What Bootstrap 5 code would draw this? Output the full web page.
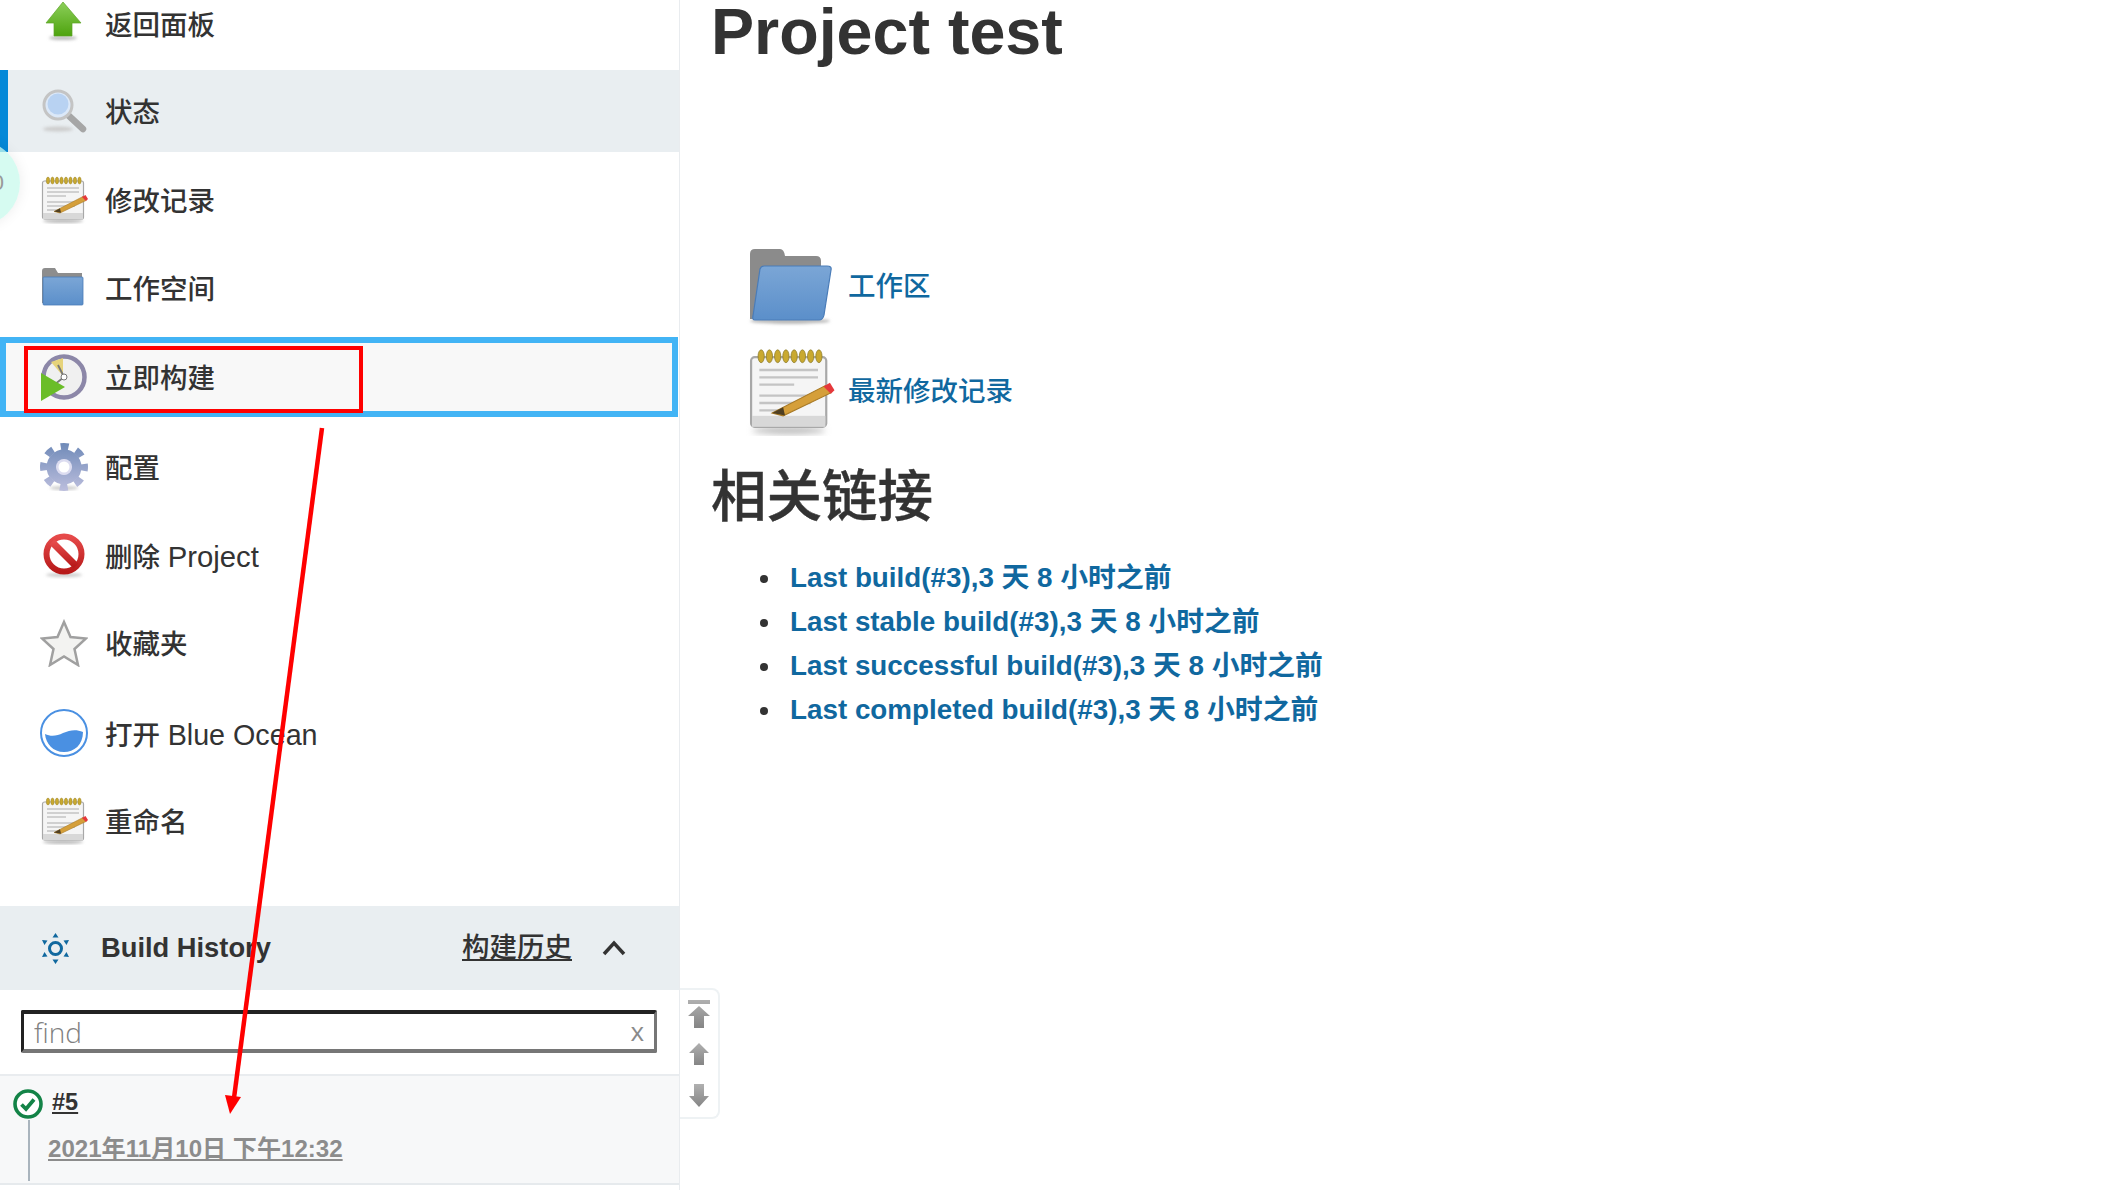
<!DOCTYPE html>
<html lang="zh"><head><meta charset="utf-8"><title>Project test</title>
<link href="https://cdn.jsdelivr.net/npm/bootstrap@5.3.0/dist/css/bootstrap.min.css" rel="stylesheet">
<style>
html,body{height:1190px;overflow:hidden;background:#fff}
body{font-family:"Liberation Sans","Noto Sans CJK SC",sans-serif;color:#333}
.pg{height:1190px;position:relative;overflow:hidden}
.side{width:680px;flex:none;border-right:1px solid #e9ecef;height:1190px}
.mrow{height:88px;padding-left:40px;gap:17px;font-size:27.5px;color:#333;text-decoration:none;line-height:1;font-weight:500}
.mrow span{margin-top:4px}
.mrow i{font-style:normal;font-size:29.3px}
.mrow i.oc{font-size:28.7px}
.mrow svg{width:48px;height:48px;flex:none;filter:blur(.4px)}
.mfirst{height:70px;padding-bottom:22px}
.mact{height:82px;background:#e9eef1;border-left:8px solid #0488d8;padding-left:32px;margin-bottom:4px}
.mfocus{height:80px;margin:5px 1px 6px 0;background:#f8f8f8;border:6px solid #42b4f5;padding-left:34px}
.mgap{margin-top:2px}
.redbox{position:absolute;left:24px;top:346px;width:339px;height:67px;border:4px solid #f00}
.blob{position:absolute;left:-66px;top:140px;width:86px;height:86px;border-radius:50%;background:rgba(200,250,236,.75);box-shadow:0 0 14px rgba(0,0,0,.08);color:#999;font-size:22px;line-height:86px;text-align:right;padding-right:16px}
.histhead{height:84px;margin-top:41px;background:#e9eef1;padding:0 53px 0 41px;font-size:27.3px}
.histhead b{margin-left:31px}
.histhead u{font-size:27.5px;font-weight:500}
.chev{width:24px;height:16px;margin-left:30px}
.findw{margin:20px 22px 21px 21px;height:43px;border:solid;border-width:4px 3px;border-color:#222 #767676 #767676 #222;padding:0 10px;border-radius:2px}
.findw input{border:0;outline:0;font-size:28px;flex:1;min-width:0;padding:0;color:#757575;font-weight:300;font-family:"Open Sans",sans-serif;background:transparent}
.findw input::placeholder{color:#808080}
.findw span{font-size:26px;color:#8a8a8a;font-family:"Open Sans",sans-serif}
.bitem{height:111px;background:#f7f8f9;border-top:2px solid #e9ecef;border-bottom:2px solid #e6eaed;position:relative}
.bnum{position:absolute;left:52px;top:9px;font-size:23.5px;font-weight:700;color:#333}
.bdate{position:absolute;left:48px;top:55px;font-size:24.1px;font-weight:700;color:#8c8c8c}
.bcheck{position:absolute;left:12px;top:13px;width:32px;height:32px}
.bline{position:absolute;left:28px;top:44px;width:2px;height:61px;background:#a9b4bd}
.fade{position:absolute;left:-40px;top:1184px;width:420px;height:12px;border-radius:50%;background:#e3e6e8;filter:blur(8px)}
.main{padding-left:31px;flex:1}
.ttl{font-size:64.6px;font-weight:700;line-height:1;margin:0;color:#333}
.lrow{padding-left:35px;gap:13px}
.lrow svg{filter:blur(.5px)}
.lrow a{font-size:27.5px;color:#10689f;text-decoration:none;font-weight:500}
.h2x{font-size:55.5px;font-weight:500;line-height:1;margin:34px 0 0;color:#333;-webkit-text-stroke:.4px #333}
.blist{margin:31px 0 0;padding-left:72px;font-size:27.8px;line-height:44px}
.blist li{color:#333;padding-left:7px}
.blist a{color:#10689f;text-decoration:none;font-weight:600}
.scrollbox{position:absolute;left:680px;top:988px;width:40px;height:131px;border:2px solid #eef2f4;border-left:0;border-radius:0 8px 8px 0;background:#fff;padding:10px 0 0;gap:15px}
.scrollbox svg{filter:blur(.4px)}
.overlay{position:absolute;left:0;top:0;width:2110px;height:1190px;pointer-events:none}
</style></head><body>
<svg width="0" height="0" class="position-absolute">
<defs>
<linearGradient id="gG" x1="0" y1="0" x2="0" y2="1"><stop offset="0" stop-color="#8ccf5a"/><stop offset="1" stop-color="#4ea30e"/></linearGradient>
<linearGradient id="gF" x1="0" y1="0" x2="0" y2="1"><stop offset="0" stop-color="#7ba6d6"/><stop offset="1" stop-color="#5b8fca"/></linearGradient>
<linearGradient id="gP" gradientUnits="userSpaceOnUse" x1="0" y1="0" x2="0" y2="48"><stop offset="0" stop-color="#6f8ab8"/><stop offset="1" stop-color="#bcbedd"/></linearGradient>
<linearGradient id="gS" x1="0" y1="0" x2="0" y2="1"><stop offset="0" stop-color="#e64a4a"/><stop offset="1" stop-color="#b81a1a"/></linearGradient>
<linearGradient id="gA" x1="0" y1="0" x2="0" y2="1"><stop offset="0" stop-color="#b0b0b0"/><stop offset="1" stop-color="#858585"/></linearGradient>
<filter id="bl" x="-30%" y="-200%" width="160%" height="500%"><feGaussianBlur stdDeviation="1.6"/></filter>
<symbol id="note" viewBox="0 0 48 48">
<ellipse cx="23" cy="45" rx="20" ry="2" fill="#bbb" filter="url(#bl)"/>
<rect x="2.500" y="5" width="41" height="38" rx="2" fill="#f5f5f5" stroke="#a8a8a8" stroke-width="1.200"/>
<rect x="3" y="37" width="40" height="6" fill="#d8d8d8"/>
<g fill="#c9a92f" stroke="#8b7a2a" stroke-width=".4"><ellipse cx="8" cy="4.500" rx="1.700" ry="3.500"/><ellipse cx="12.500" cy="4.500" rx="1.700" ry="3.500"/><ellipse cx="17" cy="4.500" rx="1.700" ry="3.500"/><ellipse cx="21.500" cy="4.500" rx="1.700" ry="3.500"/><ellipse cx="26" cy="4.500" rx="1.700" ry="3.500"/><ellipse cx="30.500" cy="4.500" rx="1.700" ry="3.500"/><ellipse cx="35" cy="4.500" rx="1.700" ry="3.500"/><ellipse cx="39.500" cy="4.500" rx="1.700" ry="3.500"/></g>
<path d="M7 12h32M7 16h32M7 20h19M7 26h32M7 30h28M7 34h12" stroke="#c4c4c4" stroke-width="1.300"/>
<path d="M14 35.500 L43 20.500 L46 24.500 L20 37 Z" fill="#d59f3a" stroke="#a87a26" stroke-width=".6"/>
<path d="M14 35.500l6-3.200 1 4.500z" fill="#4f3f22"/>
<path d="M42 21l3.500-2 2.500 4-2 2z" fill="#e5383b"/>
</symbol>
<symbol id="gear" viewBox="0 0 48 48">
<ellipse cx="24" cy="45" rx="14" ry="2" fill="#ccc" filter="url(#bl)"/>
<circle cx="24" cy="24" r="12.500" fill="none" stroke="url(#gP)" stroke-width="10"/>
<circle cx="24" cy="24" r="20.500" fill="none" stroke="url(#gP)" stroke-width="7" stroke-dasharray="8 8.100" stroke-dashoffset="4"/>
<circle cx="24" cy="24" r="8" fill="#dcdcf0"/><circle cx="24" cy="24" r="5.500" fill="#fff"/>
</symbol>
</defs></svg>
<div class="pg d-flex">
<aside class="side d-flex flex-column">
<a class="mrow mfirst d-flex align-items-center" href="#"><svg viewBox="0 0 48 48"><ellipse cx="23" cy="38" rx="14" ry="2" fill="#bbb" filter="url(#bl)"/><path d="M23 2 L6 23 H14 V36 H32 V23 H41 Z" fill="url(#gG)" stroke="#5da327" stroke-width=".7"/></svg><span>返回面板</span></a>
<a class="mrow mact d-flex align-items-center" href="#"><svg viewBox="0 0 48 48"><ellipse cx="18" cy="42" rx="15" ry="2.500" fill="#ccc" filter="url(#bl)"/><path d="M28 28 L43 42" stroke="#a6a6a6" stroke-width="6.500" stroke-linecap="round"/><circle cx="18" cy="18" r="14" fill="#dbe8f8" stroke="#c4c4c4" stroke-width="3"/><circle cx="18" cy="17" r="10.500" fill="#b8d2f2"/></svg><span>状态</span></a>
<a class="mrow d-flex align-items-center" href="#"><svg><use href="#note"/></svg><span>修改记录</span></a>
<a class="mrow d-flex align-items-center" href="#"><svg viewBox="0 0 48 48"><path d="M2 7q0-3 3-3h10l3 5h24v30H2z" fill="#8d8d8d"/><rect x="3" y="13" width="40" height="28" rx="1" fill="url(#gF)" stroke="#4a7cb8" stroke-width=".8"/></svg><span>工作空间</span></a>
<a class="mrow mfocus d-flex align-items-center" href="#"><svg viewBox="0 0 48 48"><circle cx="24" cy="24" r="20.500" fill="#f0f0f0" stroke="#8c87a8" stroke-width="4.500"/><path d="M23 23 L11 9 L23 5 Z" fill="#e6d37a"/><path d="M24 24 L18 12M24 24 L14 32" stroke="#777" stroke-width="1.800"/><circle cx="24" cy="24" r="3" fill="#fff" stroke="#777"/><path d="M1 20 L25 34 L1 48 Z" fill="#6abd28"/></svg><span>立即构建</span></a>
<a class="mrow d-flex align-items-center" href="#"><svg><use href="#gear"/></svg><span>配置</span></a>
<a class="mrow d-flex align-items-center" href="#"><svg viewBox="0 0 48 48"><ellipse cx="24" cy="44" rx="18" ry="2" fill="#ccc" filter="url(#bl)"/><circle cx="24" cy="23" r="17.500" fill="#fff" stroke="url(#gS)" stroke-width="6"/><path d="M12 11 L36 35" stroke="url(#gS)" stroke-width="7"/></svg><span>删除 <i>Project</i></span></a>
<a class="mrow d-flex align-items-center" href="#"><svg viewBox="0 0 48 48"><path d="M24 3 L30.500 18 L46 19.500 L34.500 30 L38 46 L24 37.500 L10 46 L13.500 30 L2 19.500 L17.500 18 Z" fill="#f3f3f1" stroke="#a0a0a0" stroke-width="2.500"/></svg><span>收藏夹</span></a>
<a class="mrow mgap d-flex align-items-center" href="#"><svg viewBox="0 0 48 48"><circle cx="24" cy="24" r="23" fill="#fff" stroke="#4a90e2" stroke-width="2"/><path d="M5 25 C11 28 17 27 23 24 C30 21 36 20 43 23 C43 36 34 43 24 43 C13 43 6 35 5 25 Z" fill="#4a90e2"/></svg><span>打开 <i class="oc">Blue Ocean</i></span></a>
<a class="mrow d-flex align-items-center" href="#"><svg><use href="#note"/></svg><span>重命名</span></a>
<div class="histhead d-flex align-items-center">
<svg width="29" height="31" viewBox="0 0 29 31" class="flex-none"><circle cx="14.500" cy="15.500" r="6" fill="none" stroke="#10689f" stroke-width="3"/><path d="M14.500 0l3 4.500h-6zM14.500 31l3-4.500h-6zM1 7l5.500 .5-3 4.500zM28 7l-5.500 .5 3 4.500zM1 24l5.500-.5-3-4.500zM28 24l-5.500-.5 3-4.500z" fill="#10689f"/></svg>
<b>Build History</b>
<u class="ms-auto">构建历史</u>
<svg class="chev" viewBox="0 0 24 16"><path d="M2 14 L12 3 L22 14" fill="none" stroke="#333" stroke-width="3.500"/></svg>
</div>
<div class="findw d-flex align-items-center"><input placeholder="find" aria-label="find"><span>x</span></div>
<div class="bitem">
<svg class="bcheck" viewBox="0 0 32 32"><circle cx="16" cy="15" r="13" fill="#fff" stroke="#138347" stroke-width="3.600"/><path d="M9.500 15.500 L14 20 L22 10.500" fill="none" stroke="#138347" stroke-width="3.800"/></svg>
<div class="bline"></div>
<u class="bnum">#5</u>
<u class="bdate">2021年11月10日 下午12:32</u>
</div>
</aside>
<main class="main">
<h1 class="ttl">Project test</h1>
<div class="lrow d-flex align-items-center" style="margin-top:182px"><svg width="89" height="80" viewBox="0 0 89 80" class="flex-none"><ellipse cx="44" cy="74" rx="40" ry="3" fill="#bbb" filter="url(#bl)"/><path d="M4 7q0-5 5-5h25q4 0 5 7h31q5 0 5 5v58H4z" fill="#8b8b8b"/><path d="M14 22q1-3 4-3h63q5 0 4 4l-7 45q-1 5-5 5H9q-3 0-2-4z" fill="url(#gF)" stroke="#4a7cb8" stroke-width="1.200"/></svg><a href="#">工作区</a></div>
<div class="lrow d-flex align-items-center" style="margin-top:21px"><svg width="89" height="88" class="flex-none"><use href="#note"/></svg><a href="#">最新修改记录</a></div>
<h2 class="h2x">相关链接</h2>
<ul class="blist">
<li><a href="#">Last build(#3),3 天 8 小时之前</a></li>
<li><a href="#">Last stable build(#3),3 天 8 小时之前</a></li>
<li><a href="#">Last successful build(#3),3 天 8 小时之前</a></li>
<li><a href="#">Last completed build(#3),3 天 8 小时之前</a></li>
</ul>
</main>
<div class="blob">0</div>
<div class="redbox"></div>
<div class="fade"></div>
<div class="scrollbox d-flex flex-column align-items-center">
<svg width="24" height="28" viewBox="0 0 24 28"><path d="M1 0h22v4H1z M12 6 L23 16 H17 V28 H7 V16 H1 Z" fill="url(#gA)"/></svg>
<svg width="22" height="22" viewBox="0 0 22 22"><path d="M11 0 L21 10 H16 V22 H6 V10 H1 Z" fill="url(#gA)"/></svg>
<svg width="22" height="23" viewBox="0 0 22 23" class="mt-1"><path d="M11 23 L21 12 H16 V0 H6 V12 H1 Z" fill="url(#gA)"/></svg>
</div>
<svg class="overlay" viewBox="0 0 2110 1190"><path d="M322 428 L234 1098" stroke="#f00" stroke-width="4.500" fill="none"/><path d="M225 1095 L241 1097 L230 1114 Z" fill="#f00"/></svg>
</div>
</body></html>
